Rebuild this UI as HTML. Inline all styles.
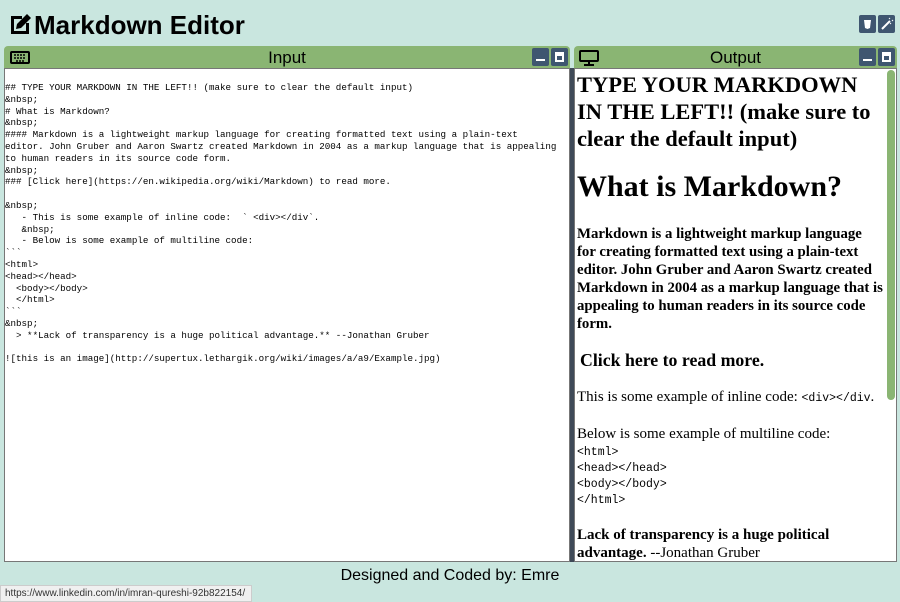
<!DOCTYPE html>
<html><head><style>
body{margin:0;width:900px;height:600px;background:#c9e6df;font-family:"Liberation Sans",sans-serif;position:relative;overflow:hidden}
.title{position:absolute;left:8px;top:8px;font-size:26px;font-weight:bold;line-height:34px;display:flex;align-items:center}
.hb{position:absolute;top:15px;width:17px;height:18px;background:#3f5670;border-radius:2px}
.panel{position:absolute;top:46px}
.ph{height:22px;background:#8ab573;border-radius:4px 4px 0 0;position:relative;text-align:center;font-size:17px;line-height:23px}
.btn{position:absolute;top:2px;width:17px;height:18px;background:#3f5670;border-radius:2px}
.btn.min:after{content:"";position:absolute;left:4px;right:4px;bottom:5px;height:2px;background:#fff}
.btn.max:after{content:"";position:absolute;left:4px;right:4px;top:4px;bottom:4px;background:#fff;}
.btn.max:before{content:"";position:absolute;left:6px;right:6px;top:8px;bottom:6px;background:#3f5670;z-index:2}
.pb{background:#fff;border:1px solid #777;box-sizing:border-box;overflow:hidden}
pre{margin:0;font-family:"Liberation Mono",monospace;font-size:9.2px;line-height:11.8px;padding:13px 12px 0 0;white-space:pre-wrap}
.out{font-family:"Liberation Serif",serif;padding:0 2px;position:relative}
.out h2{font-size:22.5px;margin:2px 0 0;line-height:27px;width:298px}
.out h1{font-size:30px;margin:17px 0 0;line-height:36px}
.out h4{font-size:14.8px;margin:20px 0 0;line-height:18px;width:306px}
.out h3{font-size:17.8px;margin:17px 0 0 3px}
.out p{font-size:15px;margin:17px 0 0;line-height:18px}
.out code{font-family:"Liberation Mono",monospace;font-size:11.5px}
.cb{font-family:"Liberation Mono",monospace;font-size:11.5px;line-height:16px;white-space:pre;margin-top:2px}
</style></head><body>
<div class="title"><svg width="24" height="24" viewBox="0 0 24 24"><path d="M3 3h11v3H6v12h12v-8h3v11H3z" fill="#000"/><path d="M19 1l4 4-10 10-5 1 1-5z" fill="#000"/></svg><span style="margin-left:2px">Markdown Editor</span></div>
<div class="hb" style="left:859px"><svg width="17" height="18"><path d="M5 5h7l-1 8-2.5 1-2.5-1z" fill="#fff"/></svg></div>
<div class="hb" style="left:878px"><svg width="17" height="18"><path d="M4 14l8-8" stroke="#fff" stroke-width="2"/><path d="M11 3l1 1M14 5l1 1M12 8l1 1" stroke="#fff"/></svg></div>

<div class="panel" style="left:4px;width:566px">
<div class="ph"><svg style="position:absolute;left:6px;top:5px" width="20" height="13"><rect x="1" y="1" width="18" height="11" rx="1" fill="none" stroke="#000" stroke-width="2"/><path d="M4 4h12M4 7h12M6 10h8" stroke="#000" stroke-width="1.5" stroke-dasharray="2 1"/></svg>Input<div class="btn min" style="right:21px"></div><div class="btn max" style="right:2px"></div></div>
<div class="pb" style="height:494px"><pre>## TYPE YOUR MARKDOWN IN THE LEFT!! (make sure to clear the default input)
&amp;nbsp;
# What is Markdown?
&amp;nbsp;
#### Markdown is a lightweight markup language for creating formatted text using a plain-text editor. John Gruber and Aaron Swartz created Markdown in 2004 as a markup language that is appealing to human readers in its source code form.
&amp;nbsp;
### [Click here](https://en.wikipedia.org/wiki/Markdown) to read more.

&amp;nbsp;
   - This is some example of inline code:  &#96; &lt;div&gt;&lt;/div&#96;.
   &amp;nbsp;
   - Below is some example of multiline code:
&#96;&#96;&#96;
&lt;html&gt;
&lt;head&gt;&lt;/head&gt;
  &lt;body&gt;&lt;/body&gt;
  &lt;/html&gt;
&#96;&#96;&#96;
&amp;nbsp;
  &gt; **Lack of transparency is a huge political advantage.** --Jonathan Gruber

![this is an image](http://supertux.lethargik.org/wiki/images/a/a9/Example.jpg)</pre></div>
</div>

<div style="position:absolute;left:570px;top:68px;width:4px;height:494px;background:#3f4a58"></div>

<div class="panel" style="left:574px;width:323px">
<div class="ph"><svg style="position:absolute;left:5px;top:4px" width="20" height="16"><rect x="1" y="1" width="18" height="10" rx="1" fill="none" stroke="#000" stroke-width="2"/><path d="M10 11v3M5 15h10" stroke="#000" stroke-width="2"/></svg>Output<div class="btn min" style="right:21px"></div><div class="btn max" style="right:2px"></div></div>
<div class="pb" style="height:494px;position:relative"><div style="position:absolute;right:1px;top:1px;width:8px;height:330px;background:#8ab573;border-radius:4px"></div>
<div class="out" style="width:298px">
<h2>TYPE YOUR MARKDOWN IN THE LEFT!! (make sure to clear the default input)</h2>
<h1>What is Markdown?</h1>
<h4>Markdown is a lightweight markup language for creating formatted text using a plain-text editor. John Gruber and Aaron Swartz created Markdown in 2004 as a markup language that is appealing to human readers in its source code form.</h4>
<h3>Click here to read more.</h3>
<p>This is some example of inline code: <code>&lt;div&gt;&lt;/div</code>.</p>
<p>Below is some example of multiline code:</p>
<div class="cb">&lt;html&gt;
&lt;head&gt;&lt;/head&gt;
&lt;body&gt;&lt;/body&gt;
&lt;/html&gt;</div>
<p style="margin-top:17px"><b>Lack of transparency is a huge political advantage.</b> --Jonathan Gruber</p>
</div></div>
</div>

<div style="position:absolute;top:567px;left:0;width:900px;text-align:center;font-size:16px">Designed and Coded by: Emre</div>
<div style="position:absolute;left:0;top:585px;height:15px;padding:0 6px 0 4px;background:#f0f0f0;border:1px solid #ccc;font-size:10px;line-height:15px;color:#333">https://www.linkedin.com/in/imran-qureshi-92b822154/</div>
</body></html>
